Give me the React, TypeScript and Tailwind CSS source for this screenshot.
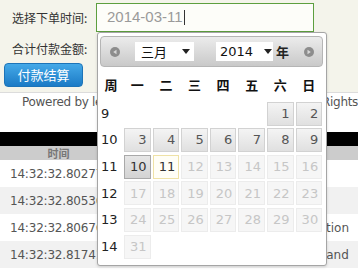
const cjk = { fontFamily: '"Noto Sans CJK SC", "Noto Sans", sans-serif' };
const cal = { fontFamily: '"DejaVu Sans", "Noto Sans CJK SC", sans-serif' };

type Day = { n: number; kind: "on" | "sel" | "today" | "off" } | null;

const weeks: { wk: number; days: Day[] }[] = [
  { wk: 9, days: [null, null, null, null, null, { n: 1, kind: "on" }, { n: 2, kind: "on" }] },
  { wk: 10, days: [3, 4, 5, 6, 7, 8, 9].map((n) => ({ n, kind: "on" as const })) },
  {
    wk: 11,
    days: [
      { n: 10, kind: "sel" },
      { n: 11, kind: "today" },
      ...[12, 13, 14, 15, 16].map((n) => ({ n, kind: "off" as const })),
    ],
  },
  { wk: 12, days: [17, 18, 19, 20, 21, 22, 23].map((n) => ({ n, kind: "off" as const })) },
  { wk: 13, days: [24, 25, 26, 27, 28, 29, 30].map((n) => ({ n, kind: "off" as const })) },
  { wk: 14, days: [{ n: 31, kind: "off" }, null, null, null, null, null, null] },
];

const cellClass = {
  on: "border-[#d2d2d2] bg-gradient-to-b from-[#f4f4f4] to-[#e0e0e0] text-[#555]",
  sel: "border-[#a9a9a9] bg-gradient-to-b from-[#e6e6e6] to-[#d3d3d3] text-[#333]",
  today: "border-[#efe2a6] bg-[#fffef6] text-[#333]",
  off: "border-[#ececec] bg-[#f6f6f6] text-[#c6c6c6]",
};

function NavDot({ dir }: { dir: "l" | "r" }) {
  return (
    <span className="flex h-[10px] w-[10px] items-center justify-center rounded-full bg-[#8d8d8d]">
      <svg width="6" height="6" viewBox="0 0 6 6">
        {dir === "l" ? <path d="M4.5 0.8 L1.2 3 L4.5 5.2 Z" fill="#d8d8d8" /> : <path d="M1.5 0.8 L4.8 3 L1.5 5.2 Z" fill="#d8d8d8" />}
      </svg>
    </span>
  );
}

function Caret() {
  return (
    <svg width="8" height="5" viewBox="0 0 8 5">
      <path d="M0 0 H8 L4 5 Z" fill="#222" />
    </svg>
  );
}

function Calendar() {
  return (
    <div
      className="absolute left-[97px] top-[32px] h-[234px] w-[230px] rounded-[3px] border border-[#a5a5a5] bg-white pl-[2px] pt-[3px] shadow-[0_1px_3px_rgba(0,0,0,0.15)]"
      style={cal}
    >
      <div className="flex h-[31px] w-[223px] items-center rounded-[4px] border border-[#b5b5b5] bg-gradient-to-b from-[#ececec] to-[#c9c9c9]">
        <span className="ml-[9px]">
          <NavDot dir="l" />
        </span>
        <div className="ml-[15px] flex h-[19px] w-[59px] items-center justify-between bg-white pl-[6px] pr-[4px] text-[13px] text-[#111]">
          <span style={cjk}>三月</span>
          <Caret />
        </div>
        <div className="ml-[22px] flex h-[19px] w-[57px] items-center justify-between bg-white pl-[4px] pr-[1px] text-[13px] text-[#111]">
          <span>2014</span>
          <Caret />
        </div>
        <span className="ml-[3px] text-[13px] font-bold text-[#222]" style={cjk}>
          年
        </span>
        <span className="ml-auto mr-[8px]">
          <NavDot dir="r" />
        </span>
      </div>

      <div
        className="mt-[3px] grid h-[29px] grid-cols-[22px_repeat(7,26.6px)] items-center gap-x-[2px] text-center text-[13px] font-bold text-[#111]"
        style={cjk}
      >
        {["周", "一", "二", "三", "四", "五", "六", "日"].map((d) => (
          <span key={d}>{d}</span>
        ))}
      </div>

      <div className="mt-[2.6px] grid grid-cols-[22px_repeat(7,26.6px)] auto-rows-[24px] gap-x-[2px] gap-y-[2.6px]">
        {weeks.map((w) => (
          <div key={w.wk} className="contents">
            <span className="flex items-center pl-[1px] text-[13px] text-[#222]">{w.wk}</span>
            {w.days.map((d, i) =>
              d ? (
                <span
                  key={i}
                  className={`flex items-center justify-end border pr-[3px] text-[13px] ${cellClass[d.kind]}`}
                >
                  {d.n}
                </span>
              ) : (
                <span key={i} />
              ),
            )}
          </div>
        ))}
      </div>
    </div>
  );
}

const rows = [
  { t: "14:32:32.80277", r: "" },
  { t: "14:32:32.80536", r: "" },
  { t: "14:32:32.80676", r: "Function" },
  { t: "14:32:32.81741", r: "Brand" },
];

export default function App() {
  return (
    <div className="relative h-[273px] w-[358px] overflow-hidden bg-white">
      <div className="h-[93px] border-b border-[#dcdcdc] bg-[#f4f4eb] pt-[3px]" style={cjk}>
        <div className="flex items-center">
          <span className="ml-[12px] w-[84px] text-[12px] text-[#333]">选择下单时间:</span>
          <div className="flex h-[29px] w-[218px] items-center border border-[#5d9f3f] bg-[#fdfdf9] pl-[10px]">
            <span className="text-[15px] text-[#9a9a9a]" style={{ fontFamily: '"Liberation Sans", sans-serif' }}>
              2014-03-11
            </span>
            <span className="ml-[1px] h-[15px] w-px bg-[#333]" />
          </div>
        </div>
        <div className="ml-[12px] mt-[6px] text-[12px] leading-[22px] text-[#333]">合计付款金额:</div>
        <button className="ml-[4px] mt-[3px] flex h-[24px] w-[79px] items-center justify-center rounded-[4px] border border-[#1d74b8] bg-gradient-to-b from-[#44a9e8] to-[#1b7bc6] text-[13px] text-white">
          付款结算
        </button>
      </div>

      <div
        className="flex h-[18px] items-center whitespace-nowrap pl-[22px] text-[12px] text-[#555]"
        style={{ fontFamily: '"DejaVu Sans", sans-serif' }}
      >
        <span className="tracking-[-0.3px]">Powered by leafcms.com</span>
        <span className="absolute left-[322px] tracking-[-0.3px]">Rights</span>
      </div>

      <div className="mt-[21px] h-[14px] bg-black" />
      <div className="flex h-[14px] items-center bg-[#cccccc]">
        <span className="w-[117px] text-center text-[11px] font-bold text-[#777]" style={cjk}>
          时间
        </span>
      </div>
      {rows.map((r, i) => (
        <div
          key={r.t}
          className={`relative flex h-[27px] items-center whitespace-nowrap text-[12px] text-[#555] ${i % 2 ? "bg-[#f1f1f1]" : "bg-white"}`}
          style={{ fontFamily: '"DejaVu Sans", sans-serif' }}
        >
          <span className="pl-[10px] tracking-[-0.2px]">{r.t}</span>
          {r.r && <span className={`absolute ${r.r === "Brand" ? "left-[313px]" : "left-[298px]"}`}>{r.r}</span>}
        </div>
      ))}

      <Calendar />
    </div>
  );
}
